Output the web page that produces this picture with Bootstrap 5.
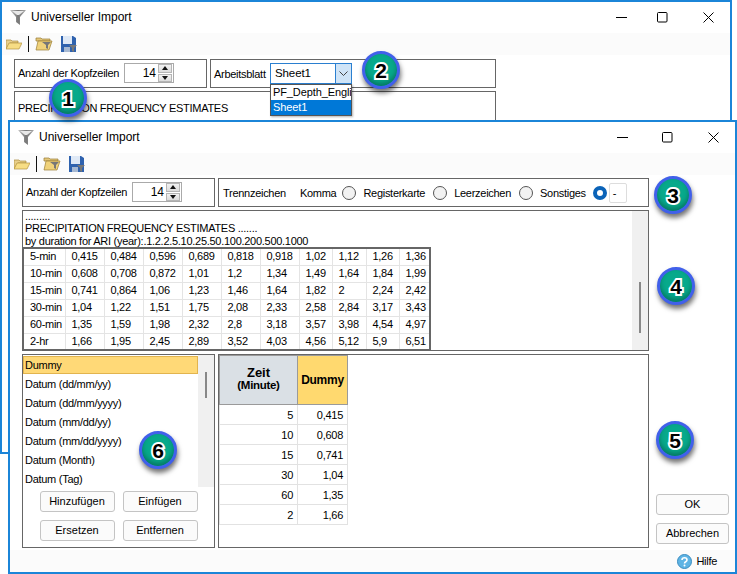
<!DOCTYPE html>
<html lang="de"><head><meta charset="utf-8"><title>Universeller Import</title>
<link href="https://cdn.jsdelivr.net/npm/bootstrap@5.3.0/dist/css/bootstrap.min.css" rel="stylesheet">
<style>
html,body{width:737px;height:574px;overflow:hidden;background:#fff}
body{position:relative;font-family:"Liberation Sans",Arial,sans-serif;font-size:11px;letter-spacing:-.28px;color:#000;line-height:14px}
.dlg{position:absolute;background:#fff;border:2px solid #1b85d8;display:flex;flex-direction:column}
.dlg-back{left:0;top:0;width:732px;height:454px}
.dlg-front{left:8px;top:120px;width:729px;height:454px;z-index:3}
.tbar{height:31px;flex:none;padding:0 0 1px 8px}
.ttl{margin-left:5px;font-size:12px;letter-spacing:0}
.wctl{margin-left:auto;margin-right:-1px}
.wctl span{width:46px;display:flex;justify-content:center}
.dlg-back .wctl span:first-child{width:35px}
.dlg-front .wctl span:first-child{width:44px}
.tools{height:22px;flex:none;background:#fbfbfb;padding-left:4px}
.tsep{width:1px;height:16px;background:#111;margin:0 6px 0 6px;display:block}
.fsave{margin-left:8px}
.main{padding:3px 0 0 12px;width:639px;flex:none;min-height:0}
.main-back{padding-top:4px}
.rowx{display:flex;gap:3px}
.grp{border:1px solid #666;background:#fff}
.g1{width:193px;height:29px;padding-left:3px}
.lab1{width:106px;margin-bottom:2px}
.spin{width:50px;height:20px;border:1px solid #aaa;background:#fff;justify-content:flex-end;font-size:12px;letter-spacing:0;margin-top:-1px}
.spin b{font-weight:400;padding-right:2px}
.sbtn{width:14px;height:18px;margin-right:1px;display:flex;flex-direction:column;gap:1px}
.sbtn span{flex:1;background:linear-gradient(#f2f2f2,#dcdcdc);border:1px solid #b5b5b5;display:flex;align-items:center;justify-content:center}
.up,.dn{width:0;height:0;border-left:3.500px solid transparent;border-right:3.500px solid transparent;display:block}
.up{border-bottom:4px solid #111}.dn{border-top:4px solid #111}
.rad{width:14px;height:14px;border-radius:50%;border:1px solid #555;background:#f2f2f2;display:block;flex:none}
.rad-on{border:4px solid #0b63b8;background:#fff;margin-left:-1px}
.rlab{margin:0 8px 0 7px}
.rlab-k{margin:0 6px 0 7px}
.rinp{width:18px;height:20px;border:1px solid #ddd;border-radius:2px;margin-left:2px;padding:2px 0 0 3px}
.num-b{position:absolute;width:38px;height:38px;border-radius:50%;background:#07a98b;border:3px solid #4160ea;box-shadow:1px 4px 5px rgba(0,0,0,.55),inset 0 -3px 5px rgba(0,0,0,.3);display:flex;align-items:center;justify-content:center;font:700 21px/1 "Liberation Sans",sans-serif;letter-spacing:0;color:#000;-webkit-text-stroke:4px #fff;paint-order:stroke fill;z-index:5}
.txtbox{height:141px;margin-top:3px;width:627px;overflow:hidden;position:relative;padding:0 0 0 2px;line-height:13px}
.sb-v{position:absolute;right:0;top:0;bottom:0;width:16px;background:#f0f0f0}
.sb-thumb{position:absolute;left:7px;width:2px;background:#888}
.tb-d{border:2px solid #666;border-collapse:collapse;table-layout:fixed;width:407px;margin:-1px 0 0 -3px}
.tb-d td{border:1px solid #e4e4e4;padding:0 0 0 6px;height:17px;line-height:15px;white-space:nowrap}
.lst-wrap{width:193px;height:194px;position:relative}
.lst{height:132px;overflow:hidden;position:relative}
.lst div{height:19px;line-height:19px;padding-left:2px}
.lst .sel{background:#ffd977;border:1px solid #e2b44e;height:18px;line-height:17px;margin:1px 17px 1px 0;padding-left:1px;width:175px}
.btnw{background:#fbfbfb;border:1px solid #c4c4c4;border-radius:3px;width:75px;height:21px;font-size:11px;line-height:19px;padding:0;text-align:center;color:#000}
.btn-s{width:73px}
.gridw{width:431px;height:194px}
.tz{border-collapse:collapse;table-layout:fixed;width:128px}
.tz th{border:1px solid #9a9a9a;text-align:center;font-weight:700;line-height:13px;font-size:12px}
.tz .th-z{background:#dae0e5;height:49px;font-size:13px;letter-spacing:0;padding-bottom:3px}
.tz .th-z span{font-size:11.5px;letter-spacing:-.3px;display:block}
.tz .th-d{background:#ffd96f}
.tz td{border:1px solid #e2e2e2;text-align:right;height:20px;padding:0 4px 0 0}
.side{width:73px;margin-left:7px;padding-bottom:6px}
.hlp{height:22px;background:#fbfbfb;flex:none;justify-content:flex-end;padding-right:18px;gap:4px;font-size:11px}
.menu{position:absolute;left:270px;top:84px;width:82px;height:32px;background:#fff;border:1px solid #555;box-shadow:1px 1px 2px rgba(0,0,0,.3);font-size:11px;letter-spacing:-.1px;line-height:15px;z-index:2;overflow:hidden;white-space:nowrap}
.menu div{padding-left:2px;height:15px}
.menu .on{background:#0078d7;color:#fff}
.combo{width:82px;height:21px;border:1px solid #2a7fd0;position:relative;padding-left:4px;font-size:11.500px;line-height:19px;letter-spacing:-.1px}
.combo i{position:absolute;right:0;top:0;bottom:0;width:16px;background:#cfe4f7;border-left:1px solid #2a7fd0;display:flex;align-items:center;justify-content:center}
.back-text{width:482px;height:60px;margin-top:3px;padding:9px 0 0 3px}
</style></head><body>

<div class="dlg dlg-back">
  <div class="tbar d-flex align-items-center">
    <svg width="16" height="15" viewBox="0 0 16 15"><defs><linearGradient id="fg" x1="0" x2="1"><stop offset="0" stop-color="#c9c9c9"/><stop offset=".5" stop-color="#777"/><stop offset="1" stop-color="#aaa"/></linearGradient></defs><path d="M0 0h16L10 7v8l-4-3V7z" fill="url(#fg)"/><path d="M2 1h12L9 5H7z" fill="#e8e8e8"/></svg>
    <span class="ttl">Universeller Import</span>
    <div class="wctl d-flex align-items-center"><span><svg width="11" height="11"><path d="M0 5.500h11" stroke="#000"/></svg></span><span><svg width="11" height="11"><rect x=".5" y=".5" width="9.500" height="9.500" rx="1" fill="none" stroke="#000"/></svg></span><span><svg width="11" height="11"><path d="M.5.5l10 10M10.500.5l-10 10" stroke="#000"/></svg></span></div>
  </div>
  <div class="tools d-flex align-items-center">
    <svg width="16" height="12" viewBox="0 0 16 12"><path d="M0 2h5l1 1h6v2H4L0 11z" fill="#e8cf8a" stroke="#a98a3c" stroke-width=".7"/><path d="M3 5h13l-3 6H0z" fill="#f7dd84" stroke="#b3923f" stroke-width=".7"/></svg>
    <i class="tsep"></i>
    <svg width="18" height="14" viewBox="0 0 18 14"><path d="M1 1h5l1 1h8v2H1z" fill="#e3c67a" stroke="#9a7c34" stroke-width=".7"/><path d="M3 4h14l-3 9H1z" fill="#f0d27a" stroke="#9a7c34" stroke-width=".7"/><path d="M7 5h9l-3 3v4l-2-1V8z" fill="#777"/></svg>
    <svg class="fsave" width="16" height="16" viewBox="0 0 16 16"><path d="M0 0h12l3 2v14H0z" fill="#2f62ae"/><rect x="2" y="0" width="9" height="8" fill="#dfe9f6"/><rect x="3" y="11" width="6" height="5" fill="#a7b9d2"/><path d="M8 9h8l-3 3v4l-2-1v-3z" fill="#777"/></svg>
  </div>
  <div class="main main-back">
    <div class="rowx">
      <div class="grp g1 d-flex align-items-center"><span class="lab1">Anzahl der Kopfzeilen</span>
        <div class="spin d-flex align-items-center"><b>14</b><div class="sbtn"><span><i class="up"></i></span><span><i class="dn"></i></span></div></div></div>
      <div class="grp d-flex align-items-center" style="width:286px;height:29px;padding-left:3px"><span style="width:56px">Arbeitsblatt</span><div class="combo">Sheet1<i><svg width="9" height="6"><path d="M.5.5l4 4 4-4" fill="none" stroke="#444"/></svg></i></div></div>
    </div>
    <div class="grp back-text">PRECIPITATION FREQUENCY ESTIMATES</div>
  </div>
</div>
<div class="menu"><div>PF_Depth_Engli</div><div class="on">Sheet1</div></div>

<div class="dlg dlg-front">
  <div class="tbar d-flex align-items-center">
    <svg width="16" height="15" viewBox="0 0 16 15"><path d="M0 0h16L10 7v8l-4-3V7z" fill="url(#fg)"/><path d="M2 1h12L9 5H7z" fill="#e8e8e8"/></svg>
    <span class="ttl">Universeller Import</span>
    <div class="wctl d-flex align-items-center"><span><svg width="11" height="11"><path d="M0 5.500h11" stroke="#000"/></svg></span><span><svg width="11" height="11"><rect x=".5" y=".5" width="9.500" height="9.500" rx="1" fill="none" stroke="#000"/></svg></span><span><svg width="11" height="11"><path d="M.5.5l10 10M10.500.5l-10 10" stroke="#000"/></svg></span></div>
  </div>
  <div class="tools d-flex align-items-center">
    <svg width="16" height="12" viewBox="0 0 16 12"><path d="M0 2h5l1 1h6v2H4L0 11z" fill="#e8cf8a" stroke="#a98a3c" stroke-width=".7"/><path d="M3 5h13l-3 6H0z" fill="#f7dd84" stroke="#b3923f" stroke-width=".7"/></svg>
    <i class="tsep"></i>
    <svg width="18" height="14" viewBox="0 0 18 14"><path d="M1 1h5l1 1h8v2H1z" fill="#e3c67a" stroke="#9a7c34" stroke-width=".7"/><path d="M3 4h14l-3 9H1z" fill="#f0d27a" stroke="#9a7c34" stroke-width=".7"/><path d="M7 5h9l-3 3v4l-2-1V8z" fill="#777"/></svg>
    <svg class="fsave" width="16" height="16" viewBox="0 0 16 16"><path d="M0 0h12l3 2v14H0z" fill="#2f62ae"/><rect x="2" y="0" width="9" height="8" fill="#dfe9f6"/><rect x="3" y="11" width="6" height="5" fill="#a7b9d2"/><path d="M8 9h8l-3 3v4l-2-1v-3z" fill="#777"/></svg>
  </div>
  <div class="d-flex flex-grow-1" style="min-height:0">
    <div class="main">
      <div class="rowx">
        <div class="grp g1 d-flex align-items-center"><span class="lab1">Anzahl der Kopfzeilen</span>
          <div class="spin d-flex align-items-center"><b>14</b><div class="sbtn"><span><i class="up"></i></span><span><i class="dn"></i></span></div></div></div>
        <div class="grp d-flex align-items-center" style="width:431px;height:29px;padding-left:4px">
          <span style="margin-right:7px">Trennzeichen</span><span class="rlab-k">Komma</span><i class="rad"></i>
          <span class="rlab">Registerkarte</span><i class="rad"></i>
          <span class="rlab">Leerzeichen</span><i class="rad"></i>
          <span class="rlab">Sonstiges</span><i class="rad rad-on"></i>
          <span class="rinp">-</span>
        </div>
      </div>
      <div class="grp txtbox">
        <div style="height:11px;line-height:11px">.........</div>
        <div>PRECIPITATION FREQUENCY ESTIMATES .......</div>
        <div>by duration for ARI (year):.1.2.2.5.10.25.50.100.200.500.1000</div>
        <table class="tb-d"><colgroup><col style="width:42px"><col style="width:39px"><col style="width:39px"><col style="width:39px"><col style="width:39px"><col style="width:39px"><col style="width:39px"><col style="width:33px"><col style="width:34px"><col style="width:33px"><col style="width:31px"></colgroup><tbody>
<tr><td>5-min</td><td>0,415</td><td>0,484</td><td>0,596</td><td>0,689</td><td>0,818</td><td>0,918</td><td>1,02</td><td>1,12</td><td>1,26</td><td>1,36</td></tr>
<tr><td>10-min</td><td>0,608</td><td>0,708</td><td>0,872</td><td>1,01</td><td>1,2</td><td>1,34</td><td>1,49</td><td>1,64</td><td>1,84</td><td>1,99</td></tr>
<tr><td>15-min</td><td>0,741</td><td>0,864</td><td>1,06</td><td>1,23</td><td>1,46</td><td>1,64</td><td>1,82</td><td>2</td><td>2,24</td><td>2,42</td></tr>
<tr><td>30-min</td><td>1,04</td><td>1,22</td><td>1,51</td><td>1,75</td><td>2,08</td><td>2,33</td><td>2,58</td><td>2,84</td><td>3,17</td><td>3,43</td></tr>
<tr><td>60-min</td><td>1,35</td><td>1,59</td><td>1,98</td><td>2,32</td><td>2,8</td><td>3,18</td><td>3,57</td><td>3,98</td><td>4,54</td><td>4,97</td></tr>
<tr><td>2-hr</td><td>1,66</td><td>1,95</td><td>2,45</td><td>2,89</td><td>3,52</td><td>4,03</td><td>4,56</td><td>5,12</td><td>5,9</td><td>6,51</td></tr>
        </tbody></table>
        <div class="sb-v"><div class="sb-thumb" style="top:71px;height:51px"></div></div>
      </div>
      <div class="rowx" style="margin-top:3px">
        <div class="grp lst-wrap">
          <div class="lst">
            <div class="sel">Dummy</div><div>Datum (dd/mm/yy)</div><div>Datum (dd/mm/yyyy)</div><div>Datum (mm/dd/yy)</div><div>Datum (mm/dd/yyyy)</div><div>Datum (Month)</div><div>Datum (Tag)</div>
            <div class="sb-v" style="height:100%"><div class="sb-thumb" style="top:17px;height:26px"></div></div>
          </div>
          <div class="d-flex justify-content-center gap-2" style="margin-top:4px"><button class="btnw">Hinzufügen</button><button class="btnw">Einfügen</button></div>
          <div class="d-flex justify-content-center gap-2" style="margin-top:8px"><button class="btnw">Ersetzen</button><button class="btnw">Entfernen</button></div>
        </div>
        <div class="grp gridw">
          <table class="tz"><colgroup><col style="width:78px"><col style="width:50px"></colgroup><tbody>
            <tr><th class="th-z">Zeit<span>(Minute)</span></th><th class="th-d">Dummy</th></tr>
            <tr><td>5</td><td>0,415</td></tr><tr><td>10</td><td>0,608</td></tr><tr><td>15</td><td>0,741</td></tr><tr><td>30</td><td>1,04</td></tr><tr><td>60</td><td>1,35</td></tr><tr><td>2</td><td>1,66</td></tr>
          </tbody></table>
        </div>
      </div>
    </div>
    <div class="side d-flex flex-column justify-content-end gap-2">
      <button class="btnw btn-s">OK</button><button class="btnw btn-s">Abbrechen</button>
    </div>
  </div>
  <div class="hlp d-flex align-items-center">
    <svg width="15" height="15" viewBox="0 0 15 15"><circle cx="7.500" cy="7.500" r="7" fill="#5fb4e4" stroke="#3a8cc0"/><path d="M5 6c0-3 5-3 5 0 0 2-2.500 1.500-2.500 3.500" fill="none" stroke="#fff" stroke-width="1.600"/><circle cx="7.500" cy="11.500" r="1" fill="#fff"/></svg><span>Hilfe</span>
  </div>
</div>

<div class="num-b" style="left:49px;top:79px">1</div>
<div class="num-b" style="left:362px;top:51px">2</div>
<div class="num-b" style="left:654px;top:176px">3</div>
<div class="num-b" style="left:657px;top:267px">4</div>
<div class="num-b" style="left:656px;top:421px">5</div>
<div class="num-b" style="left:139px;top:431px">6</div>
</body></html>
